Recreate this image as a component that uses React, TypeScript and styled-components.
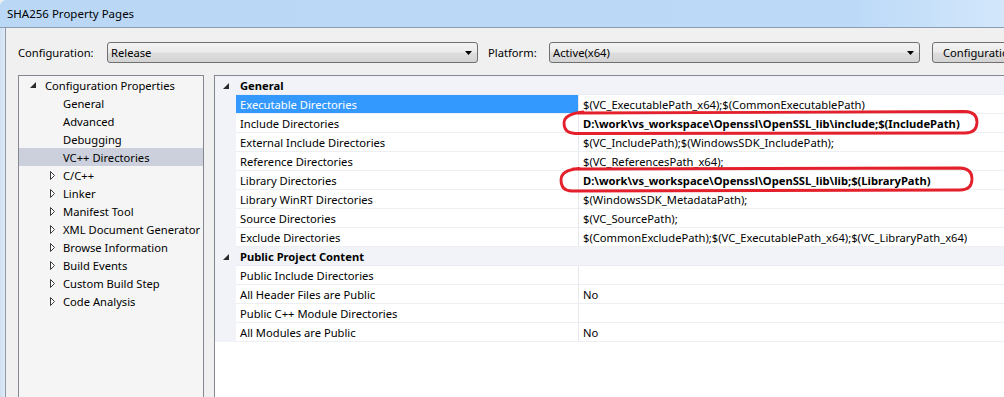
import React from 'react';
import styled, { createGlobalStyle } from 'styled-components';

const GlobalStyle = createGlobalStyle`
  html, body {
    margin: 0;
    padding: 0;
    background: #f0f0f0;
  }
  body {
    font-family: "Noto Sans", "Open Sans", sans-serif;
    font-size: 11.2px;
    color: #000;
  }
`;

const Window = styled.div`
  width: 1004px;
  height: 397px;
  overflow: hidden;
  display: flex;
  flex-direction: column;
  background: #f0f0f0;
`;

const TitleBar = styled.div`
  flex: none;
  height: 27px;
  display: flex;
  align-items: center;
  padding-left: 7px;
  background: linear-gradient(to right, #bad8f6 0%, #bcdaf8 85%, #d3e7fb 100%);
  border-bottom: 1px solid #8c9db1;
  border-top-left-radius: 6px;
  font-size: 11.5px;
  color: #000;
`;

const Body = styled.div`
  flex: 1;
  display: flex;
  min-height: 0;
`;

const FrameEdge = styled.div`
  flex: none;
  width: 5px;
  background: linear-gradient(to right, #cfe1f3, #dfeaf6);
  border-right: 1px solid #8c9aa9;
`;

const Content = styled.div`
  flex: 1;
  display: flex;
  flex-direction: column;
  padding: 14px 0 0 12px;
  min-width: 0;
`;

const Toolbar = styled.div`
  display: flex;
  align-items: center;
  height: 21px;
`;

const Label = styled.span<{ $width: number; $gap?: number }>`
  flex: none;
  width: ${p => p.$width}px;
  margin-left: ${p => p.$gap ?? 0}px;
`;

const Combo = styled.div<{ $width: number }>`
  flex: none;
  box-sizing: border-box;
  width: ${p => p.$width}px;
  height: 21px;
  border: 1px solid #707070;
  border-radius: 3px;
  background: linear-gradient(#f3f3f3 0%, #ebebeb 48%, #dedede 52%, #d3d3d3 100%);
  display: flex;
  align-items: center;
  justify-content: space-between;
  padding: 0 5px 0 3px;
`;

const Button = styled.div`
  flex: none;
  box-sizing: border-box;
  width: 160px;
  height: 21px;
  margin-left: 12px;
  border: 1px solid #707070;
  border-radius: 3px;
  background: linear-gradient(#f3f3f3 0%, #ebebeb 48%, #dedede 52%, #d3d3d3 100%);
  display: flex;
  align-items: center;
  padding-left: 10px;
  white-space: nowrap;
`;

const Panels = styled.div`
  display: flex;
  gap: 10px;
  margin-top: 12px;
  flex: 1;
`;

const TreePanel = styled.div`
  flex: none;
  box-sizing: border-box;
  width: 186px;
  height: 340px;
  border: 1px solid #828790;
  background: #f5f5f5;
  overflow: hidden;
`;

const TreeRow = styled.div<{ $level: number; $selected?: boolean }>`
  height: 18px;
  display: flex;
  align-items: center;
  padding-left: ${p => 8 + p.$level * 18}px;
  background: ${p => (p.$selected ? '#cbd0dc' : 'transparent')};
  white-space: nowrap;
`;

const Expander = styled.span<{ $open?: boolean }>`
  flex: none;
  width: 18px;
  display: flex;
  align-items: center;
  padding-left: ${p => (p.$open ? 3 : 5)}px;
  box-sizing: border-box;
`;

const GridPanel = styled.div`
  position: relative;
  flex: none;
  box-sizing: border-box;
  width: 820px;
  height: 340px;
  border: 1px solid #828790;
  border-right: none;
  background: #fff;
`;

const GridRow = styled.div`
  display: grid;
  grid-template-columns: 21px 343px 1fr;
  height: 19px;
`;

const Gutter = styled.div`
  background: #f1f3f8;
  display: flex;
  align-items: center;
  padding-left: 8px;
`;

const CategoryCell = styled.div`
  grid-column: 2 / 4;
  background: #f1f3f8;
  font-weight: bold;
  display: flex;
  align-items: center;
  padding-left: 4px;
  border-bottom: 1px solid #e9ecf2;
`;

const NameCell = styled.div<{ $selected?: boolean }>`
  display: flex;
  align-items: center;
  padding-left: 4px;
  border-bottom: 1px solid #edeff3;
  border-right: 1px solid #e6e8ee;
  background: ${p => (p.$selected ? '#3399ff' : '#fff')};
  color: ${p => (p.$selected ? '#fff' : '#000')};
  white-space: nowrap;
`;

const ValueCell = styled.div<{ $bold?: boolean }>`
  display: flex;
  align-items: center;
  padding-left: 4px;
  border-bottom: 1px solid #edeff3;
  font-weight: ${p => (p.$bold ? 'bold' : 'normal')};
  white-space: nowrap;
`;

// hand-drawn red marks over the grid
const Marks = styled.svg`
  position: absolute;
  left: 0;
  top: 0;
  pointer-events: none;
`;

const OpenArrow = () => (
  <svg width="6" height="6" viewBox="0 0 6 6">
    <polygon points="6,0 6,6 0,6" fill="#2b2b2b" />
  </svg>
);

const ClosedArrow = () => (
  <svg width="5" height="9" viewBox="0 0 5 9">
    <polygon points="0.5,0.5 4.5,4.5 0.5,8.5" fill="#fff" stroke="#3a3a3a" strokeWidth="1" />
  </svg>
);

const DropArrow = () => (
  <svg width="7" height="4" viewBox="0 0 7 4">
    <polygon points="0,0 7,0 3.5,4" fill="#000" />
  </svg>
);

type Prop = { name: string; value: string; bold?: boolean; selected?: boolean };

const general: Prop[] = [
  { name: 'Executable Directories', value: '$(VC_ExecutablePath_x64);$(CommonExecutablePath)', selected: true },
  { name: 'Include Directories', value: 'D:\\work\\vs_workspace\\Openssl\\OpenSSL_lib\\include;$(IncludePath)', bold: true },
  { name: 'External Include Directories', value: '$(VC_IncludePath);$(WindowsSDK_IncludePath);' },
  { name: 'Reference Directories', value: '$(VC_ReferencesPath_x64);' },
  { name: 'Library Directories', value: 'D:\\work\\vs_workspace\\Openssl\\OpenSSL_lib\\lib;$(LibraryPath)', bold: true },
  { name: 'Library WinRT Directories', value: '$(WindowsSDK_MetadataPath);' },
  { name: 'Source Directories', value: '$(VC_SourcePath);' },
  { name: 'Exclude Directories', value: '$(CommonExcludePath);$(VC_ExecutablePath_x64);$(VC_LibraryPath_x64)' },
];

const publicContent: Prop[] = [
  { name: 'Public Include Directories', value: '' },
  { name: 'All Header Files are Public', value: 'No' },
  { name: 'Public C++ Module Directories', value: '' },
  { name: 'All Modules are Public', value: 'No' },
];

const children = ['General', 'Advanced', 'Debugging', 'VC++ Directories'];
const collapsed = [
  'C/C++',
  'Linker',
  'Manifest Tool',
  'XML Document Generator',
  'Browse Information',
  'Build Events',
  'Custom Build Step',
  'Code Analysis',
];

const Category = ({ title, items }: { title: string; items: Prop[] }) => (
  <>
    <GridRow>
      <Gutter>
        <OpenArrow />
      </Gutter>
      <CategoryCell>{title}</CategoryCell>
    </GridRow>
    {items.map(p => (
      <GridRow key={p.name}>
        <Gutter />
        <NameCell $selected={p.selected}>{p.name}</NameCell>
        <ValueCell $bold={p.bold}>{p.value}</ValueCell>
      </GridRow>
    ))}
  </>
);

export default function App() {
  return (
    <Window>
      <GlobalStyle />
      <TitleBar>SHA256 Property Pages</TitleBar>
      <Body>
        <FrameEdge />
        <Content>
          <Toolbar>
            <Label $width={89}>Configuration:</Label>
            <Combo $width={371}>
              <span>Release</span>
              <DropArrow />
            </Combo>
            <Label $width={61} $gap={10}>Platform:</Label>
            <Combo $width={371}>
              <span>Active(x64)</span>
              <DropArrow />
            </Combo>
            <Button>Configuration Manager...</Button>
          </Toolbar>
          <Panels>
            <TreePanel>
              <TreeRow $level={0}>
                <Expander $open>
                  <OpenArrow />
                </Expander>
                Configuration Properties
              </TreeRow>
              {children.map(c => (
                <TreeRow key={c} $level={1} $selected={c === 'VC++ Directories'}>
                  <Expander />
                  {c}
                </TreeRow>
              ))}
              {collapsed.map(c => (
                <TreeRow key={c} $level={1}>
                  <Expander>
                    <ClosedArrow />
                  </Expander>
                  {c}
                </TreeRow>
              ))}
            </TreePanel>
            <GridPanel>
              <Category title="General" items={general} />
              <Category title="Public Project Content" items={publicContent} />
              <Marks width="800" height="140">
                <path
                  d="M362 37 L750 35.5 Q762 36 762 46 Q762 57 750 57 L360 57.5 Q349 57 349 47 Q349 38 368 36"
                  fill="none"
                  stroke="#e3202b"
                  strokeWidth="2.8"
                  strokeLinecap="round"
                />
                <path
                  d="M358 93 L745 92 Q757 92.5 757 103 Q757 114 745 114 L357 115 Q346 115 346 104 Q346 94 364 92.5"
                  fill="none"
                  stroke="#e3202b"
                  strokeWidth="2.8"
                  strokeLinecap="round"
                />
              </Marks>
            </GridPanel>
          </Panels>
        </Content>
      </Body>
    </Window>
  );
}
